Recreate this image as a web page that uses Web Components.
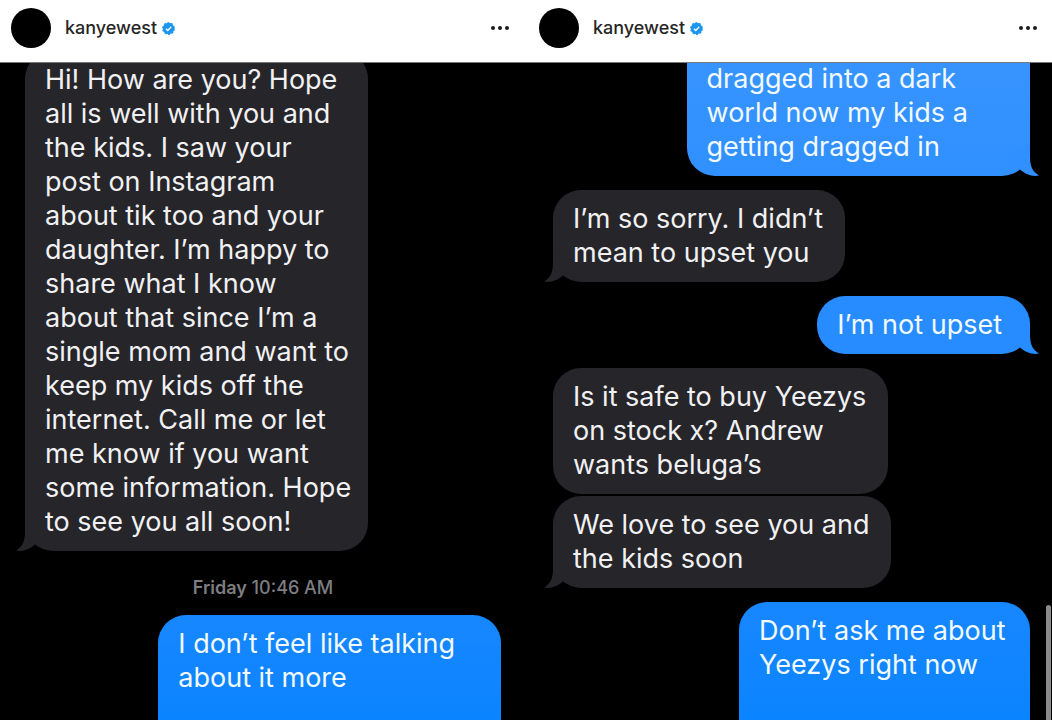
<!DOCTYPE html>
<html lang="en">
<head>
<meta charset="utf-8">
<meta name="viewport" content="width=device-width, initial-scale=1">
<title>Conversation</title>
<style>
  body { margin: 0; background: #000; font-family: Inter, "Liberation Sans", sans-serif; }
</style>
</head>
<body>
<story-pair>
  <chat-panel style="--left: 25px; --right: 25px; --bar: 0 16px 6px 11px">
    <profile-bar slot="bar" name="kanyewest"></profile-bar>
    <chat-bubble class="scrolled" side="in" tail style="--width: 72%">Hi! How are you? Hope<br>all is well with you and<br>the kids. I saw your<br>post on Instagram<br>about tik too and your<br>daughter. I’m happy to<br>share what I know<br>about that since I’m a<br>single mom and want to<br>keep my kids off the<br>internet. Call me or let<br>me know if you want<br>some information. Hope<br>to see you all soon!</chat-bubble>
    <time-stamp><b slot="day">Friday</b> 10:46 AM</time-stamp>
    <chat-bubble side="out" cut="bottom" style="--width: 72%; --fill: linear-gradient(#1787ff, #0b84ff)">I don’t feel like talking<br>about it more</chat-bubble>
  </chat-panel>
  <chat-panel style="--left: 27px; --right: 22px; --bar: 0 14px 6px 13px">
    <profile-bar slot="bar" name="kanyewest"></profile-bar>
    <chat-bubble side="out" cut="top" tail style="--width: 72%; --fill: linear-gradient(#3794ff, #3090ff); --tail: #3090ff">dragged into a dark<br>world now my kids a<br>getting dragged in</chat-bubble>
    <chat-bubble side="in" tail>I’m so sorry. I didn’t<br>mean to upset you</chat-bubble>
    <chat-bubble side="out" tail style="--fill: #268cff; --tail: #268cff">I’m not upset</chat-bubble>
    <chat-bubble side="in" grouped>Is it safe to buy Yeezys<br>on stock x? Andrew<br>wants beluga’s</chat-bubble>
    <chat-bubble side="in" tail>We love to see you and<br>the kids soon</chat-bubble>
    <chat-bubble side="out" cut="bottom" style="--width: 61%; --fill: linear-gradient(#1787ff, #0b84ff)">Don’t ask me about<br>Yeezys right now</chat-bubble>
    <scroll-thumb slot="overlay"></scroll-thumb>
  </chat-panel>
</story-pair>

<script>
  function define(name, markup, setup) {
    const template = document.createElement('template');
    template.innerHTML = markup;
    customElements.define(name, class extends HTMLElement {
      constructor() {
        super();
        this.attachShadow({ mode: 'open' }).append(template.content.cloneNode(true));
      }
      connectedCallback() { if (setup) setup(this, this.shadowRoot); }
    });
  }

  define('story-pair', `
    <style>
      :host { display: grid; grid-template-columns: 1fr 1fr; min-height: 100vh; }
    </style>
    <slot></slot>`);

  define('chat-panel', `
    <style>
      :host { display: flex; flex-direction: column; position: relative; min-width: 0; background: #000; }
      main { flex: 1; display: flex; flex-direction: column; overflow: hidden;
             padding: 0 var(--right) 0 var(--left); }
    </style>
    <slot name="bar"></slot>
    <main><slot></slot></main>
    <slot name="overlay"></slot>`);

  define('profile-bar', `
    <style>
      :host { display: block; }
      header { display: flex; align-items: center; box-sizing: border-box; height: 63px;
               padding: var(--bar); background: #fff; border-bottom: 1px solid #77787a; }
      .avatar { width: 40px; height: 40px; border-radius: 50%; background: #000; }
      a { margin: 0 5px 0 14px; color: #262626; font-size: 18px; line-height: 24px;
          font-weight: 500; text-decoration: none; }
      button { margin-left: auto; padding: 0; border: 0; background: none; display: flex; }
      svg { display: block; }
    </style>
    <header>
      <span class="avatar"></span>
      <a href="#"></a>
      <svg width="13" height="13" viewBox="0 0 26 26" role="img" aria-label="Verified">
        <circle cx="13" cy="13" r="11.500" fill="#1d96f0"/>
        <circle cx="13" cy="13" r="11.500" fill="none" stroke="#1d96f0" stroke-width="2.500" stroke-dasharray="4 3.225"/>
        <path d="M8 13.500l3.500 3.500 7-7.500" fill="none" stroke="#fff" stroke-width="2.600"/>
      </svg>
      <button type="button" aria-label="More options">
        <svg width="20" height="6" viewBox="0 0 20 6" fill="#1c1c1c">
          <circle cx="3" cy="3" r="2"/><circle cx="10" cy="3" r="2"/><circle cx="17" cy="3" r="2"/>
        </svg>
      </button>
    </header>`,
    (el, root) => { root.querySelector('a').textContent = el.getAttribute('name'); });

  define('chat-bubble', `
    <style>
      :host { display: block; position: relative; flex: none; box-sizing: border-box;
              width: var(--width, fit-content); margin-bottom: 14px; padding: 12px 22px 12px 20px;
              border-radius: 28px; background: var(--fill, #26252a); color: #f1f1f3;
              font-size: 27px; line-height: 34px; white-space: nowrap; }
      :host([side="out"]) { align-self: flex-end; padding-right: 28px; color: #f2faff; }
      :host([grouped]) { margin-bottom: 2px; }
      :host(.scrolled) { margin-top: -12px; margin-bottom: 24px; }
      :host([cut="top"]) { margin-top: -1px; padding-top: 0; border-top-left-radius: 0; border-top-right-radius: 0; }
      :host([cut="bottom"]) { flex: 1 0 auto; margin-bottom: 0; border-bottom-left-radius: 0; border-bottom-right-radius: 0; }
      svg { display: none; position: absolute; bottom: 0; left: -9px; fill: var(--tail, #26252a); }
      :host([tail]) svg { display: block; }
      :host([side="out"]) svg { left: auto; right: -9px; transform: scaleX(-1); }
    </style>
    <slot></slot>
    <svg width="32" height="32" viewBox="0 0 32 32" aria-hidden="true">
      <path d="M9 0V13C9 23 6 28 0 31.500C7 33 14 30 19 25.500L32 14Z"/>
    </svg>`);

  define('time-stamp', `
    <style>
      :host { display: block; margin-bottom: 14px; color: #7d7d82; font-size: 18px; line-height: 26px;
              font-weight: 500; text-align: center; }
      ::slotted(b) { font-weight: 600; }
    </style>
    <slot name="day"></slot><slot></slot>`);

  define('scroll-thumb', `
    <style>
      :host { display: block; position: absolute; right: 1px; bottom: 0; width: 5px; height: 16%;
              border-radius: 3px 3px 0 0; background: #8b8b8d; }
    </style>`);
</script>
</body>
</html>
